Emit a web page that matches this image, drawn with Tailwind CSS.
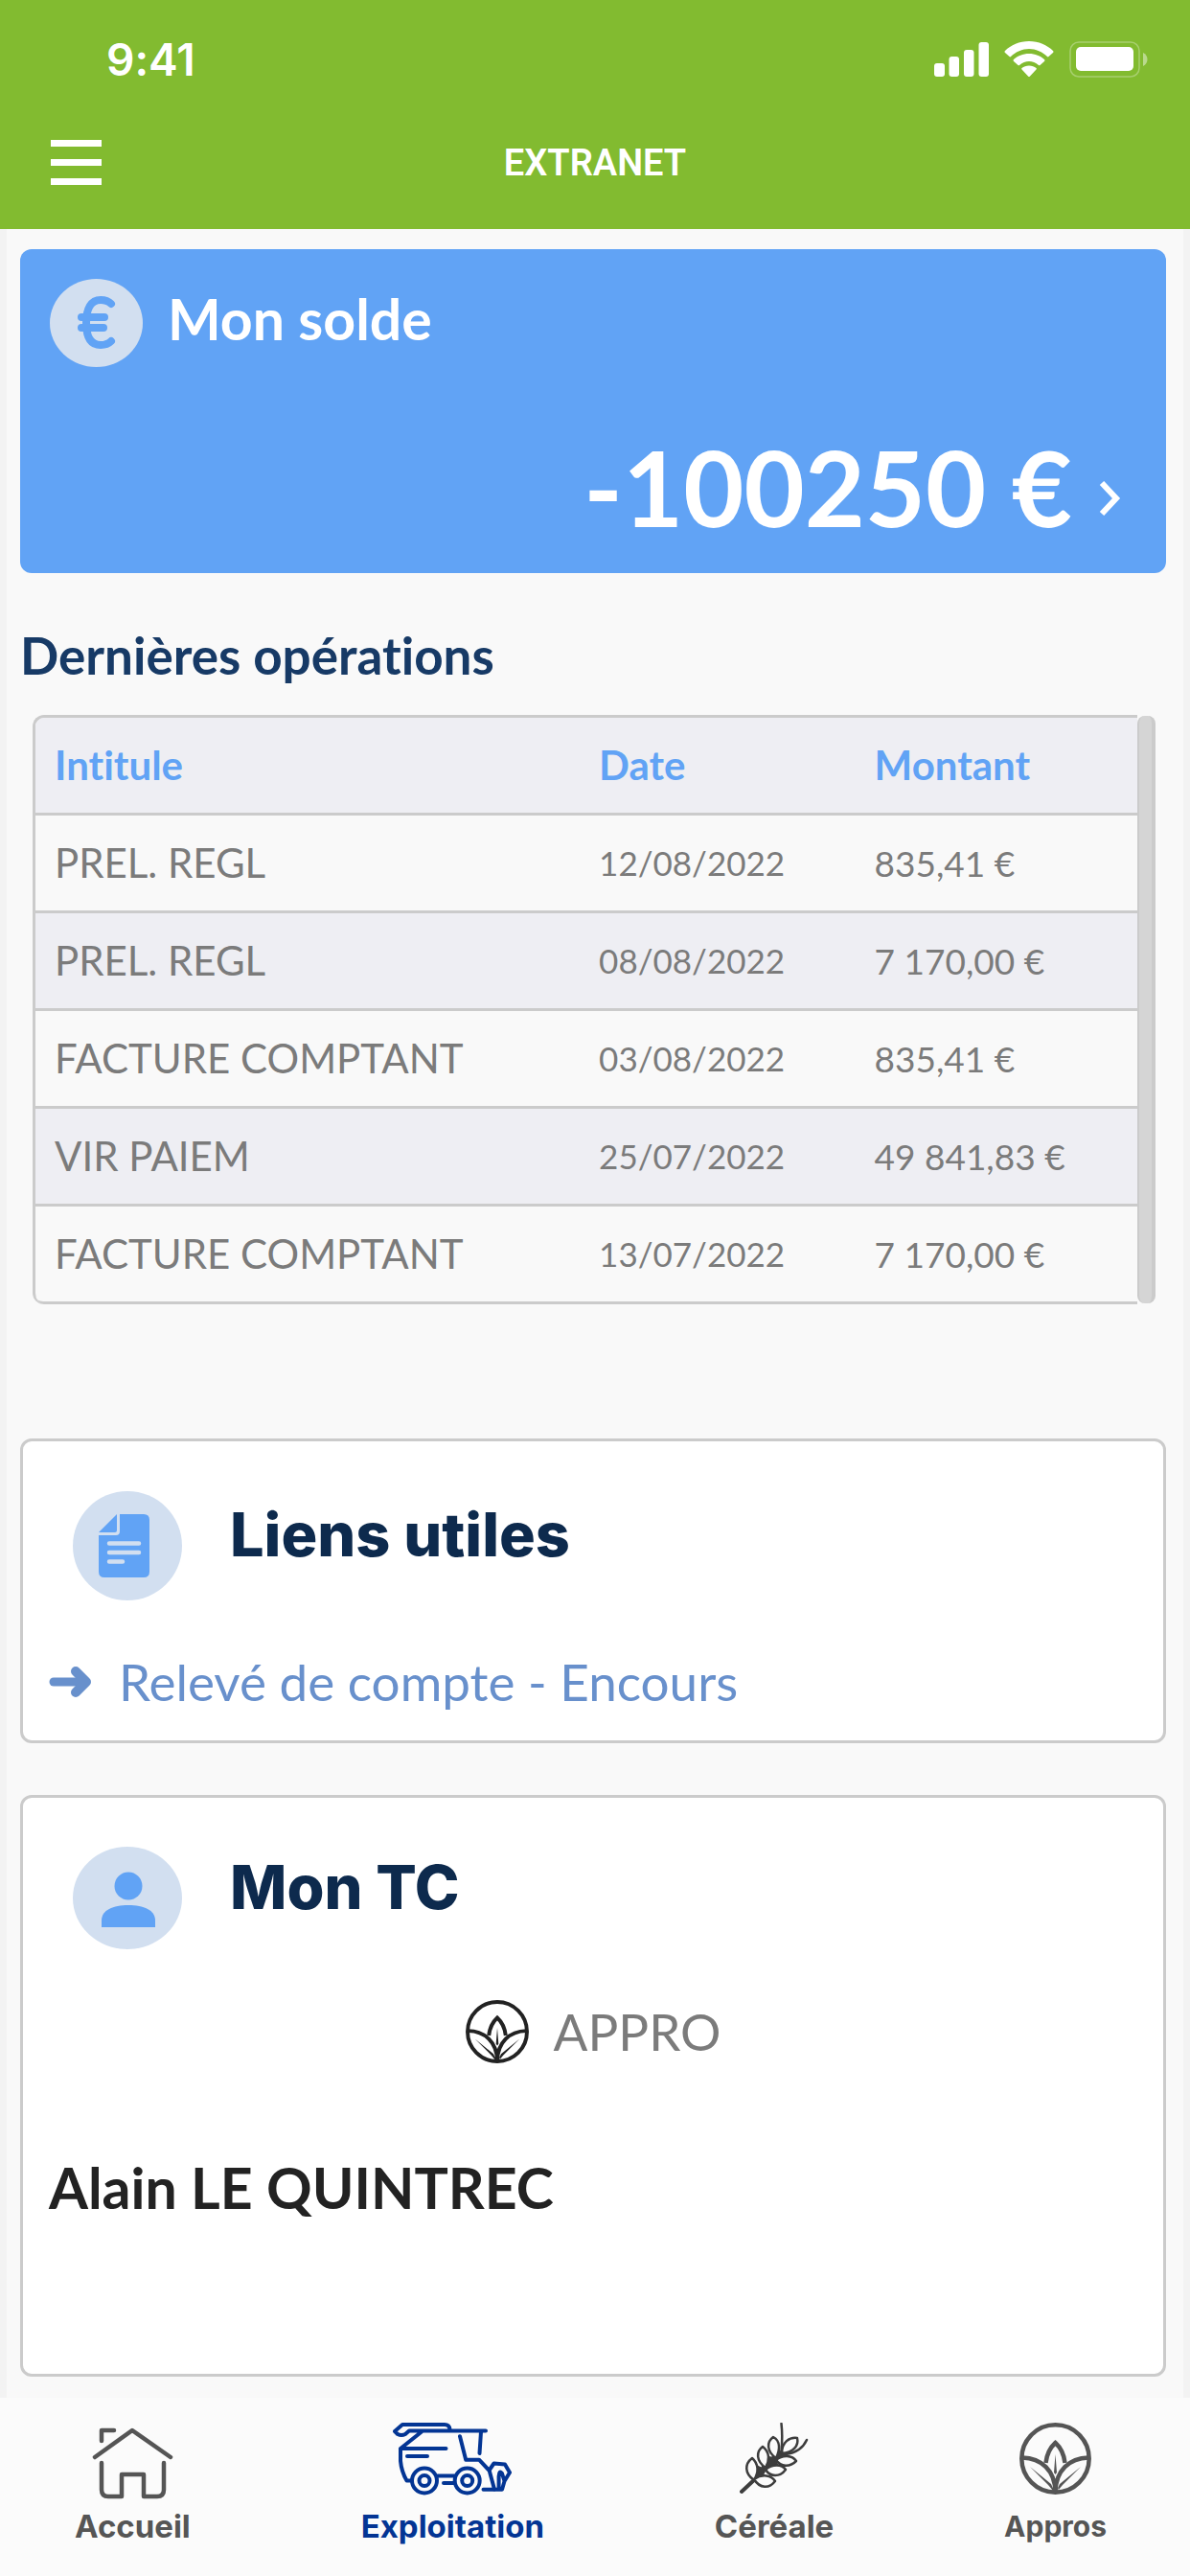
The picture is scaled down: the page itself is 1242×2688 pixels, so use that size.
<!DOCTYPE html>
<html lang="fr">
<head>
  <meta charset="UTF-8">
  <meta name="viewport" content="width=device-width, initial-scale=1.0">
  <title>Extranet</title>
  <script src="https://cdn.jsdelivr.net/npm/@tailwindcss/browser@4"></script>
</head>
<body class="min-h-screen flex flex-col bg-[#f9f9f9] font-['Lato',sans-serif] [font-variant-ligatures:none]">
  <svg class="hidden">
    <symbol id="leaf" viewBox="0 0 75 75">
      <g fill="none" stroke="currentColor" stroke-width="4.5">
        <circle cx="37.5" cy="37.5" r="35.2"/>
        <path d="M3 36.500C23 37 37 50 37.500 72C38 50 52 37 72 36.500"/>
        <path d="M27.500 42C28.500 33 32 26 37.500 21C43 26 46.500 33 47.500 42"/>
      </g>
      <path fill="currentColor" d="M37.500 33L39 52L37.500 54L36 52ZM11 46L33 64L37.500 74L30 65ZM64 46L42 64L37.500 74L45 65ZM33.500 73L37.500 58L41.500 73Z"/>
    </symbol>
  </svg>

  <header class="bg-[#82bb30] text-white pb-5">
    <div class="h-[120px] pl-[111px] pr-11 pt-1 flex items-center justify-between">
      <span class="font-['Inter',sans-serif] font-semibold text-[46px] leading-[60px]">9:41</span>
      <div class="flex gap-4">
        <svg width="57" height="38" viewBox="0 0 57 38" fill="currentColor">
          <rect x="0" y="23" width="11" height="14" rx="3"/>
          <rect x="15.500" y="16" width="10.500" height="21" rx="3"/>
          <rect x="31" y="9" width="10.500" height="28" rx="3"/>
          <rect x="46.500" y="1" width="10.500" height="36" rx="3"/>
        </svg>
        <svg width="52" height="38" viewBox="0 0 52 38" fill="currentColor">
          <path d="M26 0C36 0 45 4 51 10C52 11 51.500 11.500 51 12L46.500 16C46 16.500 45.500 16.500 45 16C40 11 33 8 26 8S12 11 7 16C6.500 16.500 6 16.500 5.500 16L1 12C.5 11.500 0 11 1 10C7 4 16 0 26 0Z"/>
          <path d="M26 13C32.500 13 38 15.500 42 19C42.700 19.700 42.500 20.300 42 21L37.500 25C37 25.300 36.500 25.300 36 25C33 22.500 29.500 21 26 21S19 22.500 16 25C15.500 25.300 15 25.300 14.500 25L10 21C9.500 20.300 9.300 19.700 10 19C14 15.500 19.500 13 26 13Z"/>
          <path d="M26 25.500C29 25.500 31.500 26.500 33.500 28C34 28.500 34 29 33.500 29.500L27 36.500C26.300 37.200 25.700 37.200 25 36.500L18.500 29.500C18 29 18 28.500 18.500 28C20.500 26.500 23 25.500 26 25.500Z"/>
        </svg>
        <svg width="82" height="38" viewBox="0 0 82 38">
          <rect x="1" y="1" width="72" height="36" rx="9" fill="none" stroke="white" stroke-opacity=".3" stroke-width="1.500"/>
          <rect x="7" y="6" width="60" height="25" rx="5" fill="white"/>
          <path d="M77 12C83 15 83 23 77 26Z" fill="white" fill-opacity=".45"/>
        </svg>
      </div>
    </div>
    <div class="h-[99px] px-[53px] grid grid-cols-[1fr_auto_1fr] items-center">
      <button type="button" aria-label="Menu" class="w-[53px] flex flex-col gap-[13px]">
        <span class="h-[7px] bg-white"></span>
        <span class="h-[7px] bg-white"></span>
        <span class="h-[7px] bg-white"></span>
      </button>
      <h1 class="font-['Roboto',sans-serif] font-semibold text-[38px] leading-[50px]">EXTRANET</h1>
    </div>
  </header>

  <main class="flex-1 border-x-[7px] border-[#f3f3f3] pl-[14px] pr-[18px] pt-[21px] pb-[21px]">
    <section class="bg-[#61a3f5] text-white rounded-xl pl-[31px] pr-[47px] pt-[31px] pb-[35px]">
      <div class="flex items-start gap-[26px]">
        <svg width="97" height="92" viewBox="0 0 97 92">
          <ellipse cx="48.500" cy="46" rx="48.500" ry="46" fill="#d2dff0"/>
          <path d="M64 26C61 23 57 22 53 22C43 22 38 31 38 46S43 69 53 69C57 69 61 68 64 65M33 40H57M33 51H56" fill="none" stroke="#61a3f5" stroke-width="8" stroke-linecap="round"/>
        </svg>
        <h2 class="font-bold text-[59px] leading-[84px]">Mon solde</h2>
      </div>
      <div class="mt-[70px] flex items-center justify-end gap-7">
        <span class="font-bold text-[109px] leading-[110px]">-100250 €</span>
        <a href="#" aria-label="Voir le solde" class="pt-6">
          <svg width="23" height="36" viewBox="0 0 23 36" fill="none" stroke="currentColor" stroke-width="6">
            <path d="M3 2L18 18L3 34"/>
          </svg>
        </a>
      </div>
    </section>

    <h2 class="mt-14 font-bold text-[53px] leading-[60px] text-[#173a66]">Dernières opérations</h2>
    <div class="mt-8 ml-[13px] mr-[11px] flex">
      <div class="flex-1 border-t-[3px] border-l-[3px] border-[#cbcbcb] rounded-l-xl overflow-hidden">
        <table class="w-full table-fixed border-separate border-spacing-0 text-left text-[#7b7b7b]">
          <thead class="bg-[#eeeef3] text-[#61a3f5] text-[42px]">
            <tr>
              <th class="w-[49.4%] h-[102px] pl-5 border-b-[3px] border-[#cbcbcb] font-bold">Intitule</th>
              <th class="w-[25%] pl-5 border-b-[3px] border-[#cbcbcb] font-bold">Date</th>
              <th class="pl-5 border-b-[3px] border-[#cbcbcb] font-bold">Montant</th>
            </tr>
          </thead>
          <tbody class="text-[37px]">
            <tr>
              <td class="h-[102px] pl-5 border-b-[3px] border-[#cbcbcb] text-[42px]">PREL. REGL</td>
              <td class="pl-5 border-b-[3px] border-[#cbcbcb] text-[35px]">12/08/2022</td>
              <td class="pl-5 border-b-[3px] border-[#cbcbcb]">835,41 €</td>
            </tr>
            <tr class="bg-[#eeeef3]">
              <td class="h-[102px] pl-5 border-b-[3px] border-[#cbcbcb] text-[42px]">PREL. REGL</td>
              <td class="pl-5 border-b-[3px] border-[#cbcbcb] text-[35px]">08/08/2022</td>
              <td class="pl-5 border-b-[3px] border-[#cbcbcb]">7 170,00 €</td>
            </tr>
            <tr>
              <td class="h-[102px] pl-5 border-b-[3px] border-[#cbcbcb] text-[42px]">FACTURE COMPTANT</td>
              <td class="pl-5 border-b-[3px] border-[#cbcbcb] text-[35px]">03/08/2022</td>
              <td class="pl-5 border-b-[3px] border-[#cbcbcb]">835,41 €</td>
            </tr>
            <tr class="bg-[#eeeef3]">
              <td class="h-[102px] pl-5 border-b-[3px] border-[#cbcbcb] text-[42px]">VIR PAIEM</td>
              <td class="pl-5 border-b-[3px] border-[#cbcbcb] text-[35px]">25/07/2022</td>
              <td class="pl-5 border-b-[3px] border-[#cbcbcb]">49 841,83 €</td>
            </tr>
            <tr>
              <td class="h-[102px] pl-5 border-b-[3px] border-[#cbcbcb] text-[42px] rounded-bl-lg">FACTURE COMPTANT</td>
              <td class="pl-5 border-b-[3px] border-[#cbcbcb] text-[35px]">13/07/2022</td>
              <td class="pl-5 border-b-[3px] border-[#cbcbcb]">7 170,00 €</td>
            </tr>
          </tbody>
        </table>
      </div>
      <div class="w-[19px] my-px rounded-lg bg-[#d5d5d5] border-l-2 border-r-4 border-[#cbcbcb]"></div>
    </div>

    <section class="mt-[140px] bg-white border-[3px] border-[#cbcbcb] rounded-xl px-[27px] pt-[52px] pb-[31px]">
      <div class="pl-[25px] flex items-start gap-[50px]">
        <svg width="114" height="114" viewBox="0 0 114 114">
          <circle cx="57" cy="57" r="57" fill="#d2dff0"/>
          <path d="M49 24H74Q80 24 80 30V84Q80 90 74 90H33Q27 90 27 84V46H45Q49 46 49 42ZM46 24V41Q46 43 44 43H27Z" fill="#61a3f5"/>
          <path d="M38 54.500H69M38 64H69M38 73.500H52" stroke="#d2dff0" stroke-width="4.500" stroke-linecap="round"/>
        </svg>
        <h2 class="font-['Inter',sans-serif] font-extrabold text-[63px] leading-[90px] text-[#0d2a4d]">Liens utiles</h2>
      </div>
      <a href="#" class="mt-[55px] flex items-center gap-[28px] text-[#6890cc] text-[53px] leading-[60px]">
        <svg width="45" height="34" viewBox="0 0 45 34" fill="none" stroke="currentColor" stroke-linecap="round" stroke-linejoin="round">
          <path d="M5 17H37" stroke-width="9"/>
          <path d="M28 6L39 17L28 28" stroke-width="10"/>
        </svg>
        Relevé de compte - Encours
      </a>
    </section>

    <section class="mt-[54px] bg-white border-[3px] border-[#cbcbcb] rounded-xl px-[27px] pt-[51px] pb-[159px]">
      <div class="pl-[25px] flex items-start gap-[50px]">
        <svg width="114" height="107" viewBox="0 0 114 107">
          <ellipse cx="57" cy="53.500" rx="57" ry="53.500" fill="#d2dff0"/>
          <ellipse cx="58" cy="41" rx="14.500" ry="14.500" fill="#61a3f5"/>
          <path d="M30 84V77C30 66 42 61 58 61S86 66 86 77V84Z" fill="#61a3f5"/>
        </svg>
        <h2 class="font-['Inter',sans-serif] font-extrabold text-[63px] leading-[84px] text-[#0d2a4d]">Mon TC</h2>
      </div>
      <div class="mt-[53px] flex items-center justify-center gap-[26px]">
        <svg width="66" height="66" class="text-[#222]"><use href="#leaf"/></svg>
        <span class="text-[53px] leading-[66px] text-[#7b7b7b]">APPRO</span>
      </div>
      <p class="mt-[95px] font-bold text-[59px] leading-[70px] text-[#222]">Alain LE QUINTREC</p>
    </section>
  </main>

  <nav class="bg-[#fbfbfb] pl-[78px] pr-[87px] pt-[26px] pb-8 flex justify-between font-['Inter',sans-serif] font-bold text-[33px] leading-10 text-[#555]">
    <a href="#" class="flex flex-col items-center gap-2">
      <svg width="85" height="80" viewBox="0 -5 85 80" fill="none" stroke="currentColor" stroke-width="4.500" stroke-linecap="round" stroke-linejoin="round">
        <path d="M10 14V3H23M3 31L42 3L82 31M10 37V65Q10 72 17 72H31V49H54V72H68Q75 72 75 65V37"/>
      </svg>
      Accueil
    </a>
    <a href="#" aria-current="page" class="flex flex-col items-center gap-2 text-[#033594]">
      <svg width="124" height="80" viewBox="0 0 124 80" fill="none" stroke="currentColor" stroke-width="4" stroke-linecap="round" stroke-linejoin="round">
        <path d="M97 8.500H17L13 12Q9 14 5 12L2 9L10 2H54Q59 2 59.500 7M30 9.500L8 27H55.500M15 35H36M8 27V40Q9 51 14.500 60.500H19"/>
        <path d="M70 14.300L76.200 38.700H90L100.700 50L106 69.500M92 9.500L90.500 32M47 55.500H64M53 63H64"/>
        <path d="M94.500 69.700H114L116.500 61L122 52L117 43.500L105.500 42.500L101 49M110.600 69V56Q111 49 114 53L116.500 61"/>
        <circle cx="33" cy="60.500" r="13"/><circle cx="33" cy="60.500" r="5.500"/>
        <circle cx="77.700" cy="60.500" r="13"/><circle cx="77.700" cy="60.500" r="5.500"/>
      </svg>
      Exploitation
    </a>
    <a href="#" class="flex flex-col items-center gap-2">
      <svg width="72" height="80" viewBox="0 0 72 80" fill="none" stroke="#3d3d3d" stroke-width="2.500" stroke-linecap="round" stroke-linejoin="round">
        <path d="M2 72L17 58" stroke-width="4"/>
        <path d="M17 58L19 46L23 48L29 36L34 37L40 29L46 33L51 36L37 39L39 44L26 50L24 54Z" fill="#3d3d3d"/>
        <path d="M43.500 1Q45 14 43.500 30M70 18Q64 31 48 33"/>
        <g fill="#fbfbfb">
          <path d="M15 60C5 53 5 43 13 37C20 43 20 52 15 60ZM27 47C17 40 17 30 24 25C32 31 31 40 27 47ZM38 37C28 30 28 20 35 15C43 19 42 29 38 37ZM44 32C44 20 52 15 60 16C62 24 56 31 44 32Z"/>
          <path d="M15 59C24 53 33 55 37 61C31 69 21 69 15 59ZM27 49C34 43 44 43 48 49C42 57 32 57 27 49ZM38 39C45 33 55 34 59 40C52 47 43 46 38 39Z"/>
        </g>
      </svg>
      Céréale
    </a>
    <a href="#" class="flex flex-col items-center gap-2 text-[30px] leading-10">
      <svg width="75" height="80" viewBox="0 0 75 80"><use href="#leaf" width="75" height="75"/></svg>
      Appros
    </a>
  </nav>
</body>
</html>
